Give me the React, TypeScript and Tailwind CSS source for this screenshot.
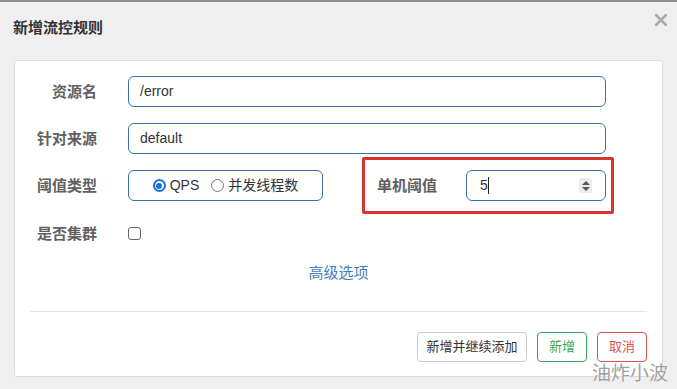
import { ReactNode } from 'react';

const font = "font-['Liberation_Sans','Noto_Sans_CJK_SC',sans-serif]";

function Label({ children }: { children: ReactNode }) {
  return <div className="w-[67px] shrink-0 text-right text-[15px] font-semibold text-[#606060] leading-5">{children}</div>;
}

function TextBox({ value }: { value: string }) {
  return (
    <div className="ml-[31px] w-[478px] h-[31px] flex items-center px-[11px] border border-[#3b6fa5] rounded-[6px] text-[14px] text-[#333]">
      {value}
    </div>
  );
}

function Radio({ checked, label }: { checked?: boolean; label: string }) {
  return (
    <div className="flex items-center gap-[4px]">
      {checked ? (
        <span className="w-[13px] h-[13px] rounded-full border-2 border-[#1a6fe0] flex items-center justify-center">
          <span className="w-[6px] h-[6px] rounded-full bg-[#1a6fe0]" />
        </span>
      ) : (
        <span className="w-[13px] h-[13px] rounded-full border border-[#777] bg-white" />
      )}
      <span className="text-[14px] text-[#333]">{label}</span>
    </div>
  );
}

export default function App() {
  return (
    <div className={`relative w-[677px] h-[389px] overflow-hidden bg-[#efefef] border-t-2 border-[#8e8e8e] ${font}`}>
      {/* 标题栏 */}
      <div className="h-[58px] flex items-start justify-between pl-[13px] pr-[10px]">
        <h3 className="pt-[16px] text-[15px] font-semibold text-[#333] leading-5">新增流控规则</h3>
        <svg className="mt-[12px]" width="12" height="12" viewBox="0 0 12 12">
          <path d="M1 1 L11 11 M11 1 L1 11" stroke="#aaa" strokeWidth="2.6" strokeLinecap="round" />
        </svg>
      </div>

      {/* 表单面板 */}
      <div className="ml-[14px] w-[649px] h-[317px] bg-white border border-[#dcdcdc] rounded-[3px] pt-[15px] px-[15px]">
        <div className="flex items-center h-[31px]">
          <Label>资源名</Label>
          <TextBox value="/error" />
        </div>

        <div className="flex items-center h-[31px] mt-[16px]">
          <Label>针对来源</Label>
          <TextBox value="default" />
        </div>

        <div className="relative flex items-center h-[31px] mt-[16px]">
          <Label>阈值类型</Label>
          <div className="ml-[31px] w-[195px] h-[31px] flex items-center justify-center gap-[12px] border border-[#3b6fa5] rounded-[6px]">
            <Radio checked label="QPS" />
            <Radio label="并发线程数" />
          </div>
          <div className="ml-[47px]">
            <Label>单机阈值</Label>
          </div>
          <div className="ml-[29px] w-[140px] h-[31px] flex items-center justify-between pl-[13px] pr-[13px] border border-[#3b6fa5] rounded-[6px]">
            <div className="flex items-center text-[14px] text-[#333]">
              5<span className="w-px h-[17px] bg-[#222]" />
            </div>
            <div className="w-[13px] h-[15px] rounded-[2px] bg-[#ececec] flex flex-col items-center justify-center gap-[2px]">
              <span className="w-0 h-0 border-l-[4px] border-r-[4px] border-b-[4px] border-l-transparent border-r-transparent border-b-[#555]" />
              <span className="w-0 h-0 border-l-[4px] border-r-[4px] border-t-[4px] border-l-transparent border-r-transparent border-t-[#555]" />
            </div>
          </div>
          {/* 红色标注框 */}
          <div className="absolute left-[332px] top-[-13px] w-[252px] h-[57px] border-[3px] border-[#d8342c] rounded-[2px]" />
        </div>

        <div className="flex items-center h-[31px] mt-[17px]">
          <Label>是否集群</Label>
          <span className="ml-[31px] w-[13px] h-[13px] rounded-[3px] border border-[#666]" />
        </div>

        <div className="mt-[14px] text-center text-[15px] leading-5 text-[#3f7fc0]">高级选项</div>

        <div className="mt-[28px] h-px bg-[#e5e5e5]" />

        <div className="mt-[20px] flex justify-end gap-[10px]">
          <button className="w-[110px] h-[30px] border border-[#ccc] rounded-[4px] text-[13px] text-[#333]">新增并继续添加</button>
          <button className="w-[50px] h-[30px] border border-[#3ca55c] rounded-[4px] text-[13px] text-[#3ca55c]">新增</button>
          <button className="w-[50px] h-[30px] border border-[#d9534f] rounded-[4px] text-[13px] text-[#d9534f]">取消</button>
        </div>
      </div>

      {/* 水印 */}
      <div className="absolute left-[592px] top-[360px] text-[19px] leading-6 text-[#a0a0a0] [text-shadow:0_0_1px_#fff,0_0_1px_#fff]">
        油炸小波
      </div>
    </div>
  );
}
